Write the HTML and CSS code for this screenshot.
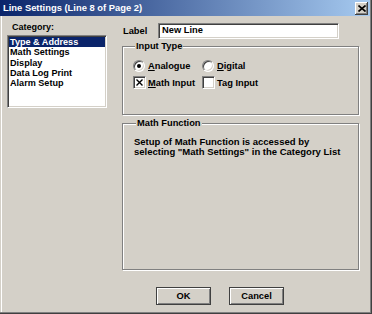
FILE: index.html
```html
<!DOCTYPE html>
<html lang="en">

<head>
    <meta charset="UTF-8">
    <title>Line Settings</title>
    <link rel="stylesheet" href="styles.css">
</head>

<body>
    <div class="window">
        <div class="titlebar">
            <span class="title">Line Settings (Line 8 of Page 2)</span>
            <span class="close">
                <svg width="8" height="7" viewBox="0 0 8 7">
                    <path d="M0.5 0.5 L7.5 6.5 M7.5 0.5 L0.5 6.5" stroke="#000" stroke-width="1.6" fill="none"/>
                </svg>
            </span>
        </div>
        <div class="content">
            <div class="category">
                <div class="cat-label">Category:</div>
                <ul class="listbox">
                    <li class="selected">Type &amp; Address</li>
                    <li>Math Settings</li>
                    <li>Display</li>
                    <li>Data Log Print</li>
                    <li>Alarm Setup</li>
                </ul>
            </div>
            <div class="main">
                <div class="label-row">
                    <span class="label-text">Label</span>
                    <div class="textbox">New Line</div>
                </div>
                <fieldset class="group input-type">
                    <legend>Input Type</legend>
                    <div class="options">
                        <span class="opt"><span class="radio checked"></span><u>A</u>nalogue</span>
                        <span class="opt"><span class="radio"></span><u>D</u>igital</span>
                        <span class="opt"><span class="check checked">
                            <svg width="7" height="7" viewBox="0 0 7 7">
                                <path d="M0.5 0.5 L6.5 6.5 M6.5 0.5 L0.5 6.5" stroke="#000" stroke-width="1.4" fill="none"/>
                            </svg>
                        </span><u>M</u>ath Input</span>
                        <span class="opt"><span class="check"></span>Tag Input</span>
                    </div>
                </fieldset>
                <fieldset class="group math">
                    <legend>Math Function</legend>
                    <p>Setup of Math Function is accessed by<br>selecting "Math Settings" in the Category List</p>
                </fieldset>
            </div>
        </div>
        <div class="buttons">
            <button class="btn default">OK</button>
            <button class="btn">Cancel</button>
        </div>
    </div>
</body>

</html>
```

FILE: styles.css
```css
* {
    margin: 0;
    padding: 0;
    box-sizing: border-box;
}

body {
    background-color: #d4d0c8;
    font-family: "Liberation Sans", Arial, sans-serif;
    font-weight: bold;
    font-size: 9.3px;
    color: #000;
}

.window {
    width: 372px;
    height: 314px;
    background-color: #d4d0c8;
    box-shadow: inset -1px -1px #404040, inset -2px -2px #808080, inset 1px 0 #d4d0c8, inset 2px 0 #fff;
}

/* title bar */
.titlebar {
    display: flex;
    align-items: center;
    justify-content: space-between;
    width: 370px;
    height: 16px;
    background: linear-gradient(to right, #0a246a, #a6caf0);
}

.title {
    color: #fff;
    padding-left: 3px;
    line-height: 16px;
    font-size: 9.4px;
}

.close {
    display: flex;
    align-items: center;
    justify-content: center;
    width: 13px;
    height: 13px;
    margin-right: 2px;
    background-color: #d4d0c8;
    box-shadow: inset -1px -1px #404040, inset 1px 1px #fff, inset -2px -2px #808080;
}

/* body */
.content {
    display: flex;
    padding-top: 6px;
}

.category {
    width: 100px;
    margin-left: 7px;
}

.cat-label {
    padding-left: 5px;
    line-height: 11px;
    margin-bottom: 2px;
    font-size: 9px;
}

.listbox {
    list-style: none;
    height: 73px;
    background-color: #fff;
    border: 1px solid;
    border-color: #808080 #fff #fff #808080;
    box-shadow: inset 1px 1px #404040, inset -1px -1px #d4d0c8;
    padding: 1px 1px 0 1px;
    font-size: 9.1px;
}

.listbox li {
    line-height: 10.25px;
    padding-left: 1px;
}

.listbox li.selected {
    background-color: #0a246a;
    color: #fff;
}

.main {
    width: 237px;
    margin-left: 15px;
}

.label-row {
    display: flex;
    align-items: center;
    margin-top: 1px;
}

.label-text {
    width: 36px;
    padding-left: 1px;
}

.textbox {
    width: 181px;
    height: 16px;
    line-height: 12px;
    padding-left: 3px;
    background-color: #fff;
    border: 1px solid;
    border-color: #808080 #fff #fff #808080;
    box-shadow: inset 1px 1px #404040, inset -1px -1px #d4d0c8;
}

/* group boxes */
.group {
    border: 1px solid #808080;
    box-shadow: 1px 1px 0 #fff, inset 1px 1px 0 #fff;
    margin: 0;
}

.group legend {
    margin-left: 2px;
    padding: 0 1px;
    line-height: 11px;
    background-color: #d4d0c8;
}

.input-type {
    margin-top: 2px;
    height: 74px;
    padding: 5px 0 0 10px;
}

.options {
    display: grid;
    grid-template-columns: 69px auto;
    grid-auto-rows: 17px;
}

.opt {
    display: flex;
    align-items: center;
}

.radio {
    width: 12px;
    height: 12px;
    margin-right: 3px;
    border-radius: 50%;
    background-color: #fff;
    border: 1px solid;
    border-color: #808080 #fff #fff #808080;
    box-shadow: inset 1px 1px #404040, inset -1px -1px #d4d0c8;
    display: flex;
    align-items: center;
    justify-content: center;
}

.radio.checked::after {
    content: "";
    width: 4px;
    height: 4px;
    border-radius: 50%;
    background-color: #000;
}

.check {
    width: 13px;
    height: 13px;
    margin-right: 2px;
    background-color: #fff;
    border: 1px solid;
    border-color: #808080 #fff #fff #808080;
    box-shadow: inset 1px 1px #404040, inset -1px -1px #d4d0c8;
    display: flex;
    align-items: center;
    justify-content: center;
}

.math {
    margin-top: 3px;
    height: 152px;
    padding: 8px 0 0 11px;
}

.math p {
    line-height: 10px;
    font-size: 9.5px;
}

/* buttons */
.buttons {
    display: flex;
    gap: 18px;
    padding-left: 156px;
    margin-top: 17px;
}

.btn {
    width: 55px;
    height: 18px;
    font-family: "Liberation Sans", Arial, sans-serif;
    font-weight: bold;
    font-size: 9.3px;
    color: #000;
    background-color: #d4d0c8;
    border: 1px solid #404040;
    box-shadow: inset 1px 1px #fff, inset -1px -1px #808080;
}
```
